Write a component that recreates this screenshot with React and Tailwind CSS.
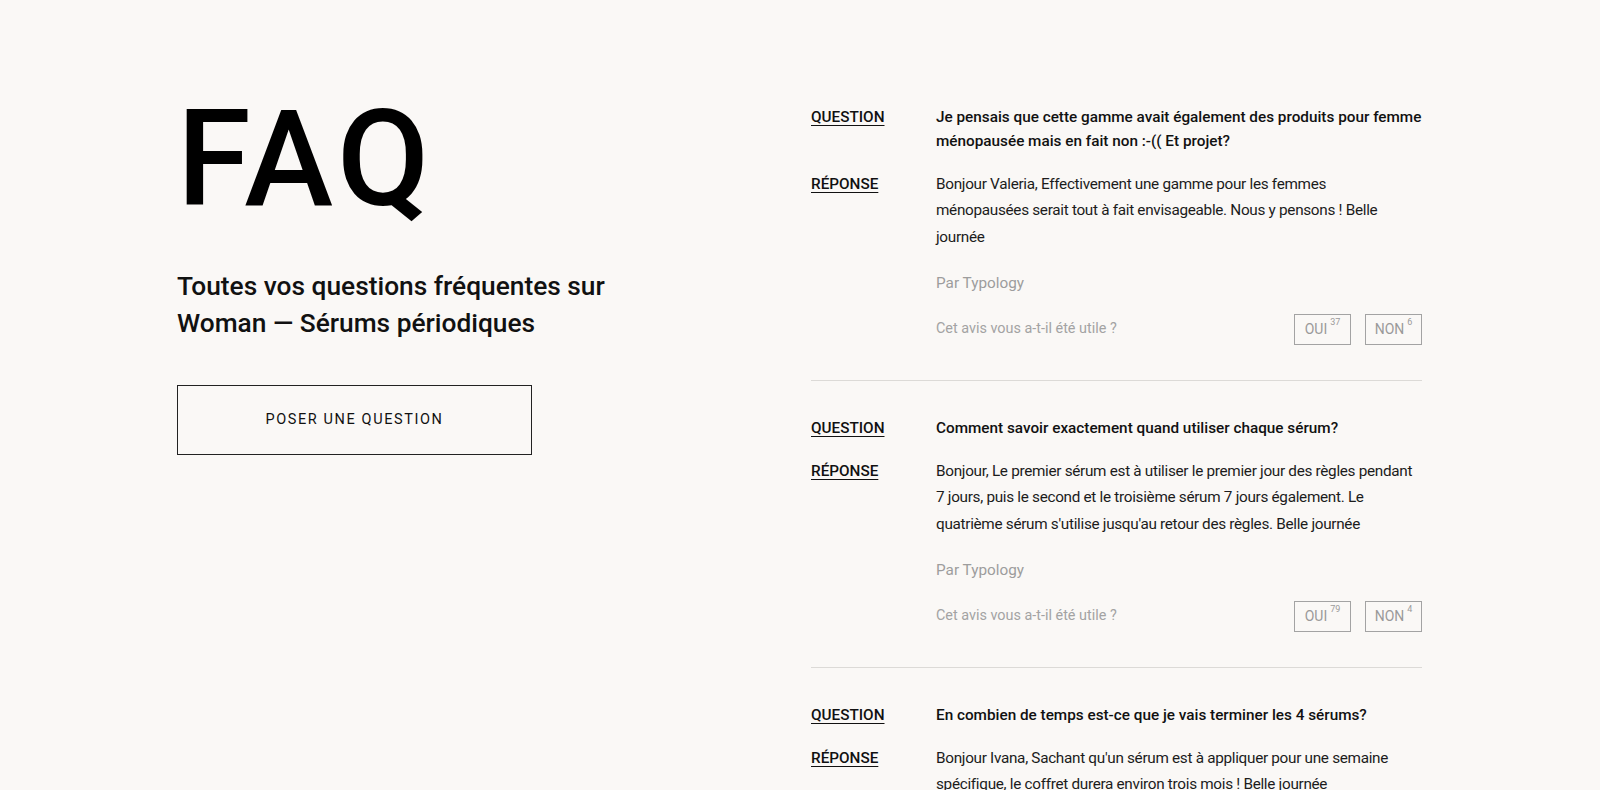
const faqs = [
  {
    question: "Je pensais que cette gamme avait également des produits pour femme ménopausée mais en fait non :-(( Et projet?",
    answer: "Bonjour Valeria, Effectivement une gamme pour les femmes ménopausées serait tout à fait envisageable. Nous y pensons ! Belle journée",
    yes: 37,
    no: 6,
  },
  {
    question: "Comment savoir exactement quand utiliser chaque sérum?",
    answer: "Bonjour, Le premier sérum est à utiliser le premier jour des règles pendant 7 jours, puis le second et le troisième sérum 7 jours également. Le quatrième sérum s'utilise jusqu'au retour des règles. Belle journée",
    yes: 79,
    no: 4,
  },
  {
    question: "En combien de temps est-ce que je vais terminer les 4 sérums?",
    answer: "Bonjour Ivana, Sachant qu'un sérum est à appliquer pour une semaine spécifique, le coffret durera environ trois mois ! Belle journée",
    yes: 52,
    no: 3,
  },
];

function Vote({ label, count }) {
  return (
    <button className="w-[57px] h-[31px] border border-[#a3a3a3] text-[14px] text-[#9a9a9a] flex items-center justify-center">
      {label}
      <sup className="text-[9px] ml-[3px] -mt-[5px]">{count}</sup>
    </button>
  );
}

function FaqItem({ item, first, last }) {
  return (
    <div className={(first ? "pt-[40px] " : "pt-[36px] ") + "pb-[35px] " + (last ? "" : "border-b border-[#dcdad7]")}>
      <div className="flex">
        <div className="w-[125px] shrink-0 text-[15.3px] leading-[23.5px] font-medium underline underline-offset-[3px]">QUESTION</div>
        <div className="flex-1 text-[15.3px] leading-[23.5px] font-medium text-[#111]">{item.question}</div>
      </div>
      <div className="flex mt-[17.5px]">
        <div className="w-[125px] shrink-0 text-[15.3px] leading-[26.5px] font-medium underline underline-offset-[3px]">RÉPONSE</div>
        <div className="flex-1">
          <p className="text-[15.3px] leading-[26.5px] tracking-[-0.3px] text-[#1c1c1c]">{item.answer}</p>
          <p className="mt-[20px] text-[15.3px] leading-[26.5px] text-[#9d9d9d]">Par Typology</p>
          <div className="mt-[17px] flex items-center justify-between">
            <span className="text-[14.4px] text-[#a3a3a3]">Cet avis vous a-t-il été utile ?</span>
            <div className="flex gap-[14px]">
              <Vote label="OUI" count={item.yes} />
              <Vote label="NON" count={item.no} />
            </div>
          </div>
        </div>
      </div>
    </div>
  );
}

export default function App() {
  return (
    <div className="w-full h-[790px] overflow-hidden bg-[#faf8f6] text-[#111] font-['Roboto',sans-serif]">
      <div className="flex pt-[66px] pl-[177px]">
        <div className="w-[634px] shrink-0">
          <h1 className="mt-[27px] text-[134px] leading-none font-medium tracking-[5px] text-black">FAQ</h1>
          <p className="mt-[41px] text-[26.3px] leading-[36.5px] font-medium text-[#111]">
            Toutes vos questions fréquentes sur
            <br />
            Woman — Sérums périodiques
          </p>
          <button className="mt-[44px] w-[355px] h-[70px] border-[1.5px] border-[#222] text-[14.5px] tracking-[1.6px] text-[#111]">
            POSER UNE QUESTION
          </button>
        </div>
        <div className="w-[611px]">
          {faqs.map((f, i) => (
            <FaqItem key={i} item={f} first={i === 0} last={i === faqs.length - 1} />
          ))}
        </div>
      </div>
    </div>
  );
}
